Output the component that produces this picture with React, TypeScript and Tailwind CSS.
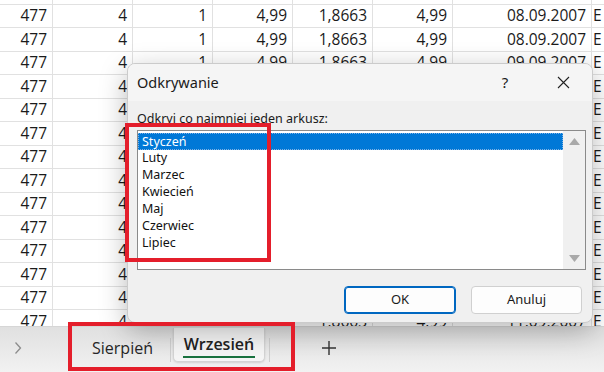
import React from 'react'

const cols = [
  { w: 'w-[53px]', key: 'a' },
  { w: 'w-[80px]', key: 'b' },
  { w: 'w-[80px]', key: 'c' },
  { w: 'w-[80px]', key: 'd' },
  { w: 'w-[80px]', key: 'e' },
  { w: 'w-[80px]', key: 'f' },
  { w: 'w-[139px]', key: 'g' },
]

const dates = [
  '08.09.2007', '08.09.2007', '08.09.2007', '09.09.2007', '09.09.2007', '09.09.2007',
  '09.09.2007', '10.09.2007', '10.09.2007', '10.09.2007', '10.09.2007', '11.09.2007',
  '11.09.2007', '11.09.2007', '11.09.2007',
]

const sheets = ['Styczeń', 'Luty', 'Marzec', 'Kwiecień', 'Maj', 'Czerwiec', 'Lipiec']

function Row({ date }: { date: string }) {
  const vals = ['477', '4', '1', '4,99', '1,8663', '4,99', date]
  return (
    <div className="flex h-[23.5px] shrink-0 border-b border-[#e1e1e1]">
      {cols.map((c, i) => (
        <div
          key={c.key}
          className={`${c.w} shrink-0 border-r border-[#e1e1e1] pr-[5px] flex items-center justify-end`}
        >
          {vals[i]}
        </div>
      ))}
      <div className="flex-1 pl-[1px] flex items-center">E</div>
    </div>
  )
}

export default function App() {
  return (
    <div
      className="relative w-[604px] h-[372px] overflow-hidden bg-white flex flex-col text-[#1b1b1b]"
      style={{ fontFamily: '"Open Sans", "Noto Sans", sans-serif' }}
    >
      {/* sheet grid */}
      <div className="h-[326px] shrink-0 overflow-hidden text-[15.5px]">
        <div className="-mt-[19px] flex flex-col">
          {dates.map((d, i) => (
            <Row key={i} date={d} />
          ))}
        </div>
      </div>

      {/* tab bar */}
      <div className="flex-1 flex items-start bg-gradient-to-b from-[#e0e0e0] to-[#f2f2f2] border-t border-[#d6d6d6]">
        <div className="w-[36px] h-[42px] flex items-center justify-center text-[#8c8c8c]">
          <svg width="8" height="14" viewBox="0 0 8 14" fill="none">
            <path d="M1.5 1.5 L6.5 7 L1.5 12.5" stroke="currentColor" strokeWidth="1.3" />
          </svg>
        </div>
        <div className="ml-[56px] h-[42px] flex items-center text-[16px] text-[#262626]">Sierpień</div>
        <div className="ml-[17px] mt-[11px] h-[24px] w-px bg-[#cfcfcf]" />
        <div className="ml-[2px] mt-[1px] w-[92px] h-[34px] bg-[#f6f6f6] rounded-b-[5px] border border-t-0 border-[#d4d4d4] flex flex-col items-center pt-[6px] shadow-[0_1px_2px_rgba(0,0,0,0.12)]">
          <span className="text-[16px] font-semibold leading-[20px] text-[#222]">Wrzesień</span>
          <span className="mt-[2px] w-[72px] h-[2px] bg-[#1a7340]" />
        </div>
        <div className="ml-[4px] mt-[11px] h-[24px] w-px bg-[#cfcfcf]" />
        <div className="ml-[51px] h-[42px] flex items-center text-[#333]">
          <svg width="16" height="16" viewBox="0 0 16 16">
            <path d="M8 1 V15 M1 8 H15" stroke="currentColor" strokeWidth="1.4" />
          </svg>
        </div>
      </div>

      {/* dialog */}
      <div
        className="absolute left-[127px] top-[63px] w-[466px] h-[260px] rounded-[8px] border border-[#cbcbcb] bg-[#f0f0f0] shadow-[0_8px_28px_rgba(0,0,0,0.28)] flex flex-col overflow-hidden"
        style={{ fontFamily: '"Noto Sans", "Open Sans", sans-serif' }}
      >
        <div className="h-[37px] shrink-0 bg-[#f5f5f5] flex items-center pl-[9px] text-[14.5px] text-[#1a1a1a]">
          <span className="flex-1">Odkrywanie</span>
          <span className="w-[20px] text-center text-[15px] mr-[38px]">?</span>
          <span className="w-[20px] flex items-center justify-center mr-[19px]">
            <svg width="13" height="13" viewBox="0 0 13 13">
              <path d="M1 1 L12 12 M12 1 L1 12" stroke="#222" strokeWidth="1.1" />
            </svg>
          </span>
        </div>
        <div className="px-[9px] pt-[10px] flex flex-col">
          <div className="h-[16px] text-[12.5px] leading-[16px] text-[#1a1a1a]">Odkryj co najmniej jeden arkusz:</div>
          <div className="mt-[3px] h-[140px] w-[449px] border border-[#8a8a8a] bg-white flex">
            <div className="flex-1 pt-[2px] pl-[1px] flex flex-col text-[12.5px] text-[#111]">
              {sheets.map((s, i) => (
                <div
                  key={s}
                  className={`h-[17px] leading-[16px] pl-[3px] ${
                    i === 0 ? 'bg-[#0078d7] text-white border border-dotted border-[#7fb2e5] -ml-px' : ''
                  }`}
                >
                  {s}
                </div>
              ))}
            </div>
            <div className="w-[22px] bg-[#f0f0f0] flex flex-col items-center justify-between py-[7px]">
              <svg width="11" height="7" viewBox="0 0 11 7">
                <path d="M5.5 0 L11 7 H0 Z" fill="#a9a9a9" />
              </svg>
              <svg width="11" height="7" viewBox="0 0 11 7">
                <path d="M0 0 H11 L5.5 7 Z" fill="#a9a9a9" />
              </svg>
            </div>
          </div>
          <div className="mt-[16px] flex justify-end gap-[15px] pr-[1px] text-[13px] text-[#1a1a1a]">
            <button className="w-[112px] h-[28px] rounded-[4px] bg-[#fdfdfd] border border-[#0067c0] shadow-[inset_0_0_0_1px_#0067c0]">OK</button>
            <button className="w-[111px] h-[28px] rounded-[4px] bg-[#fdfdfd] border border-[#d0d0d0]">Anuluj</button>
          </div>
        </div>
      </div>

      {/* annotation frames */}
      <div className="absolute left-[125px] top-[123px] w-[146px] h-[139px] border-4 border-[#e41e2b]" />
      <div className="absolute left-[68px] top-[322px] w-[227px] h-[49px] border-4 border-[#e41e2b]" />
    </div>
  )
}
